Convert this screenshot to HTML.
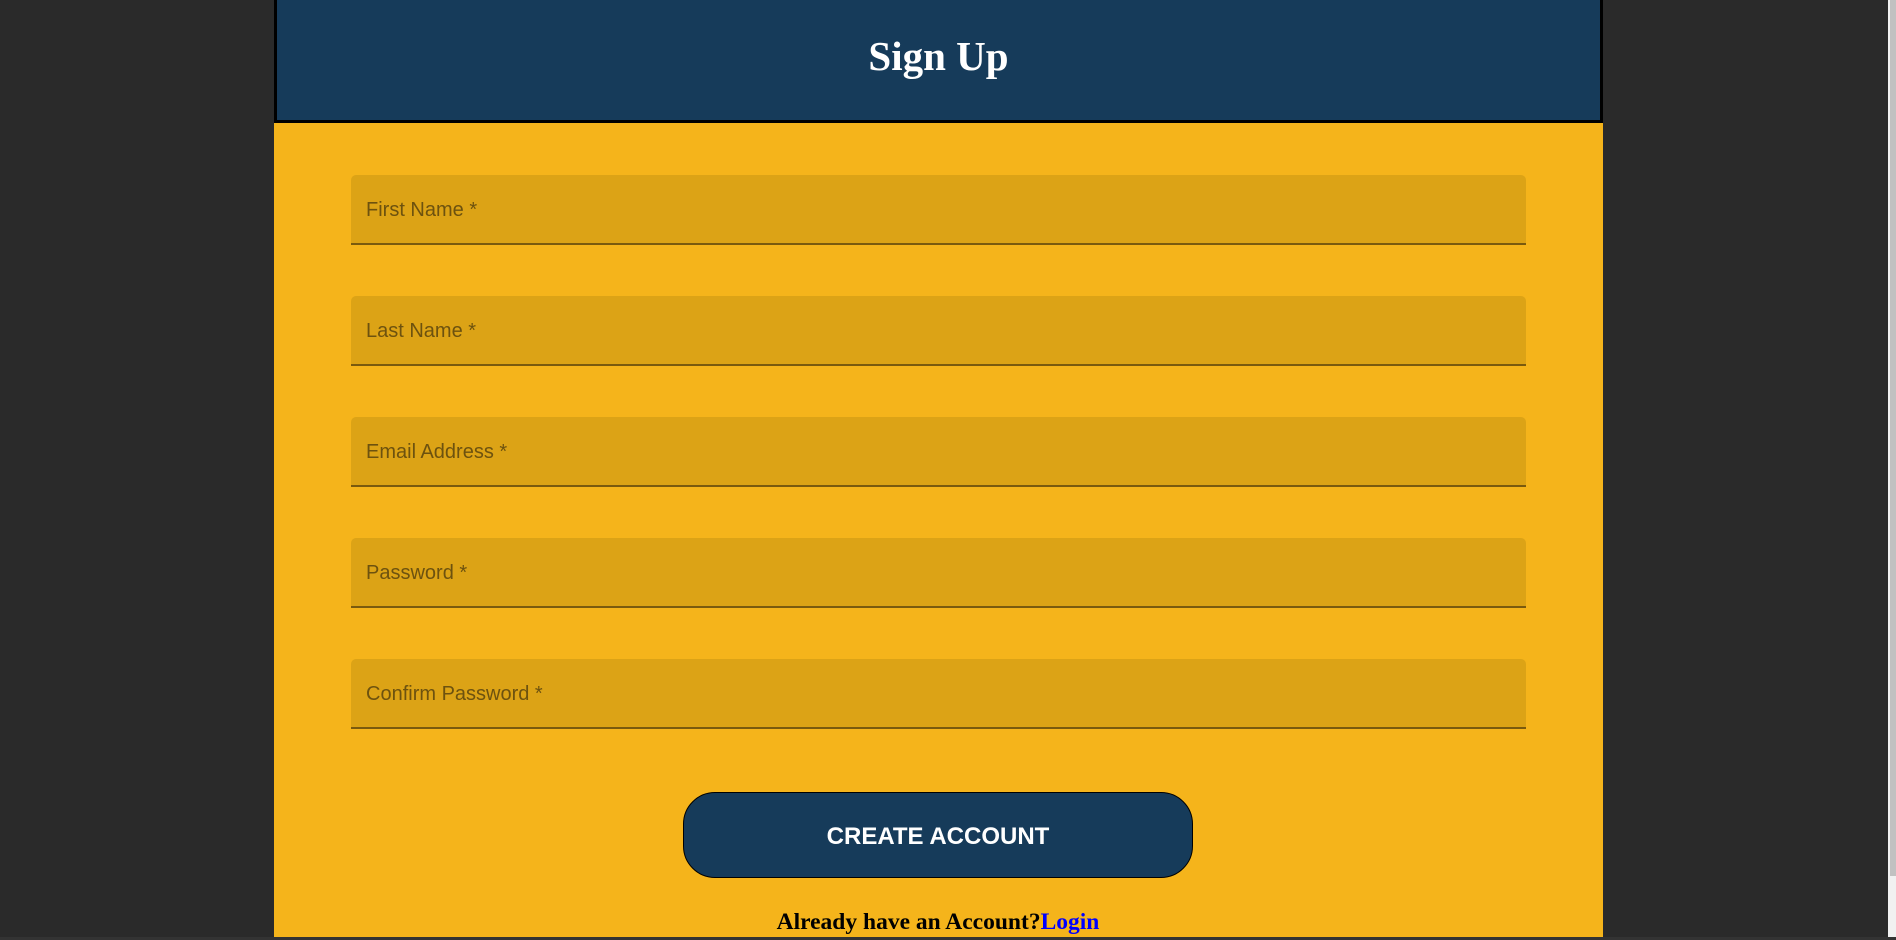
<!DOCTYPE html>
<html><head><style>
*{margin:0;padding:0;box-sizing:border-box}
html,body{width:1896px;height:940px;overflow:hidden;background:#2a2a2a;position:relative}
.c{position:absolute;left:274px;top:0;width:1329px;height:937px;background:#f5b41b}
.h{position:absolute;left:274px;top:0;width:1329px;height:123px;background:#163b5a;border:3px solid #000;border-top:none}
.h div{position:absolute;left:0;right:0;top:32px;text-align:center;color:#fff;font:bold 41px "Liberation Serif",serif}
.in{position:absolute;left:351px;width:1175px;height:70px;background:#dca316;border-radius:5px 5px 0 0;border-bottom:2px solid #7a5a0e;font:20px "Liberation Sans",sans-serif;color:#6d520f;padding:24px 0 0 15px}
.b{position:absolute;left:683px;top:792px;width:510px;height:86px;background:#163b5a;border:1px solid #000;border-radius:32px;color:#fff;font:bold 24px "Liberation Sans",sans-serif;text-align:center;line-height:88px}
.f{position:absolute;left:738px;width:400px;top:909px;text-align:center;font:bold 23.5px "Liberation Serif",serif;color:#000}
.f span{color:#0000ff}
.sb{position:absolute;left:1888px;top:0;width:8px;height:937px;background:#f1f1f1}
.sb div{position:absolute;left:2px;top:0;width:6px;height:876px;background:#c1c1c1}
.bt{position:absolute;left:0;top:937px;width:1896px;height:3px;background:#333}
</style></head><body>
<div class="c"></div>
<div class="h"><div>Sign Up</div></div>
<div class="in" style="top:175px">First Name *</div>
<div class="in" style="top:296px">Last Name *</div>
<div class="in" style="top:417px">Email Address *</div>
<div class="in" style="top:538px">Password *</div>
<div class="in" style="top:659px">Confirm Password *</div>
<div class="b">CREATE ACCOUNT</div>
<div class="f">Already have an Account?<span>Login</span></div>
<div class="sb"><div></div></div>
<div class="bt"></div>
</body></html>
